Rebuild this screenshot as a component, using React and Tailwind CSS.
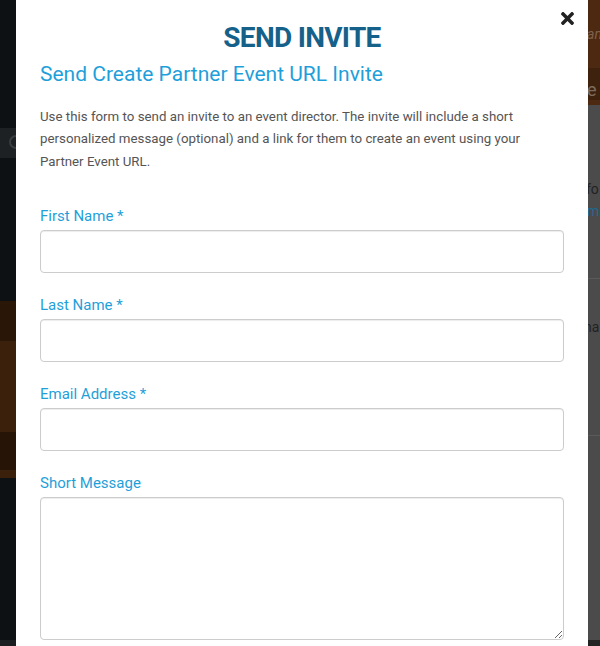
import React from "react";

function Field({ label, textarea }) {
  return (
    <div className="mt-[22px] first:mt-0">
      <label className="block text-[15px] leading-5 text-[#1f9fda]">{label}</label>
      {textarea ? (
        <textarea className="mt-1 block h-[143px] w-full rounded-[4px] border border-[#cccccc] bg-white shadow-[inset_0_1px_1px_rgba(0,0,0,0.075)] outline-none" />
      ) : (
        <input
          type="text"
          className="mt-1 block h-[43px] w-full rounded-[4px] border border-[#cccccc] bg-white shadow-[inset_0_1px_1px_rgba(0,0,0,0.075)] outline-none"
        />
      )}
    </div>
  );
}

export default function App() {
  return (
    <div
      className="flex h-[646px] w-[600px] overflow-hidden bg-[#0d1113]"
      style={{ fontFamily: "Roboto, 'Liberation Sans', sans-serif" }}
    >
      {/* left backdrop strip */}
      <div className="flex w-[16px] shrink-0 flex-col">
        <div className="h-[128px] bg-[#0d1113]" />
        <div className="relative h-[30px] overflow-hidden bg-[#1e2124]">
          <div className="absolute left-[9px] top-[7px] h-[14px] w-[14px] rounded-full border-2 border-[#3a3d40]" />
        </div>
        <div className="h-[143px] bg-[#0d1113]" />
        <div className="h-[40px] bg-[#2a1607]" />
        <div className="h-[91px] bg-[#3b200b]" />
        <div className="h-[38px] bg-[#261506]" />
        <div className="h-[8px] bg-[#3b200b]" />
        <div className="flex-1 bg-[#0d1113]" />
        <div className="h-[6px] bg-[#1b1e20]" />
      </div>

      {/* modal */}
      <div className="relative h-[646px] w-[572px] shrink-0 overflow-hidden bg-white px-6 pt-5">
        <button className="absolute right-[14px] top-[12px] text-[#222]" aria-label="Close">
          <svg width="13" height="13" viewBox="0 80 352 352" fill="currentColor">
            <path d="M242.72 256l100.07-100.07c12.280-12.28 12.28-32.19 0-44.48l-22.24-22.240c-12.28-12.28-32.19-12.28-44.48 0L176 189.28 75.93 89.21c-12.28-12.28-32.19-12.28-44.48 0L9.21 111.45c-12.28 12.28-12.28 32.19 0 44.48L109.28 256 9.21 356.07c-12.28 12.28-12.28 32.19 0 44.48l22.24 22.24c12.28 12.28 32.2 12.28 44.48 0L176 322.72l100.07 100.07c12.28 12.28 32.2 12.28 44.48 0l22.24-22.24c12.28-12.28 12.28-32.19 0-44.48L242.72 256z" />
          </svg>
        </button>
        <h2 className="text-center text-[28px] font-bold leading-[36px] tracking-[-0.7px] text-[#15618a]">SEND INVITE</h2>
        <h3 className="mt-1 text-[21px] leading-[28px] text-[#1f9fda]">Send Create Partner Event URL Invite</h3>
        <p className="mt-[18px] text-[13.3px] leading-[22.4px] text-[#555555]">
          Use this form to send an invite to an event director. The invite will include a short
          <br />
          personalized message (optional) and a link for them to create an event using your
          <br />
          Partner Event URL.
        </p>
        <form className="mt-[33px]">
          <Field label="First Name *" />
          <Field label="Last Name *" />
          <Field label="Email Address *" />
          <Field label="Short Message" textarea />
        </form>
      </div>

      {/* right backdrop strip */}
      <div className="flex w-[12px] shrink-0 flex-col overflow-hidden text-[14px] leading-5">
        <div className="flex h-[68px] items-center whitespace-nowrap bg-[#4d2911] pl-0 italic text-[#80624d]">
          <span className="-ml-[1px]">an</span>
        </div>
        <div className="flex h-[32px] items-end whitespace-nowrap bg-[#3f220e] text-[#7d6b5e]">
          <span className="-ml-[1px] text-[18px]">e l</span>
        </div>
        <div className="h-[5px] bg-[#4d2911]" />
        <div className="relative h-[173px] whitespace-nowrap bg-[#4b4b4b]">
          <span className="absolute left-[-2px] top-[74px] text-[#222]">fo</span>
          <span className="absolute left-[-1px] top-[96px] text-[#1d6a93]">m</span>
        </div>
        <div className="h-px bg-[#5a5a5a]" />
        <div className="relative h-[156px] whitespace-nowrap bg-[#4b4b4b]">
          <span className="absolute left-[-4px] top-[38px] text-[#222]">na</span>
        </div>
        <div className="h-px bg-[#5a5a5a]" />
        <div className="flex-1 bg-[#4b4b4b]" />
        <div className="h-[6px] bg-[#232323]" />
      </div>
    </div>
  );
}
